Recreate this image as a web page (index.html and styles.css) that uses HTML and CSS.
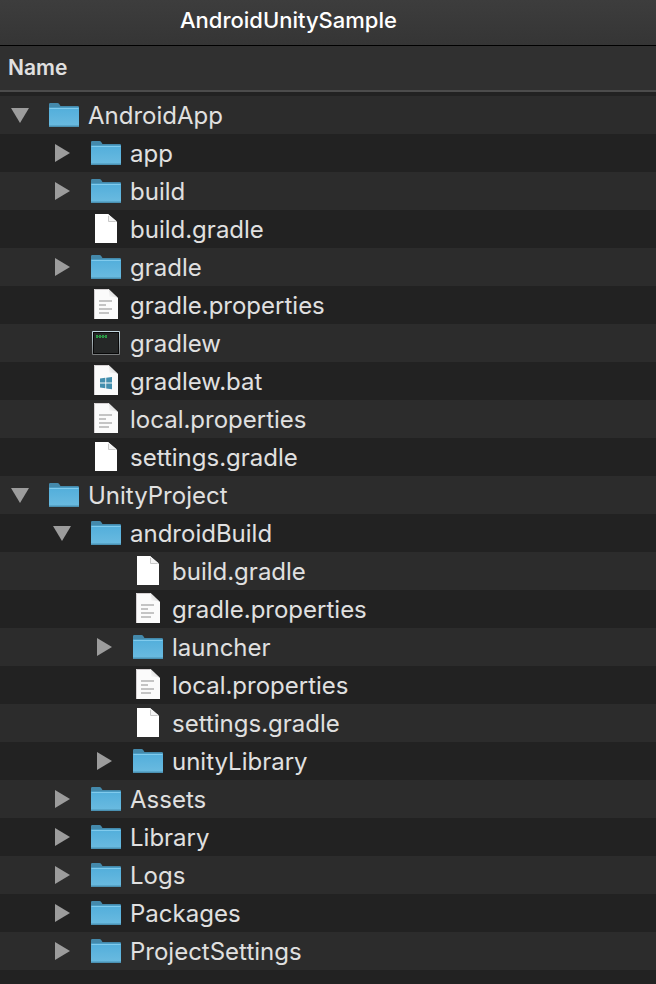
FILE: index.html
```html
<!DOCTYPE html>
<html lang="en">
<head>
    <meta charset="UTF-8">
    <meta name="viewport" content="width=device-width, initial-scale=1.0">
    <title>AndroidUnitySample</title>
    <link rel="stylesheet" href="styles.css">
</head>
<body>
    <!-- icons used by the rows -->
    <svg class="sprite" aria-hidden="true">
        <defs>
            <linearGradient id="folderFill" x1="0" y1="0" x2="0" y2="1">
                <stop offset="0" stop-color="#52aedb"/>
                <stop offset="1" stop-color="#6bbbe0"/>
            </linearGradient>
            <linearGradient id="foldFill" x1="0" y1="1" x2="1" y2="0">
                <stop offset="0" stop-color="#ffffff"/>
                <stop offset="1" stop-color="#c4c4c4"/>
            </linearGradient>
            <linearGradient id="frameFill" x1="0" y1="0" x2="0" y2="1">
                <stop offset="0" stop-color="#c3d9e2"/>
                <stop offset="1" stop-color="#77797a"/>
            </linearGradient>
        </defs>
        <symbol id="folder" viewBox="0 0 32 32">
            <path d="M1 5.2Q1 4 2.2 4H9.5Q10.500 4 11.200 5L12.500 7H29.800Q31 7 31 8.200V26H1Z" fill="#4489ab"/>
            <path d="M1 8.500H31V27Q31 28 30 28H2Q1 28 1 27Z" fill="url(#folderFill)"/>
            <path d="M1.500 9.500H30.500" stroke="#80cbed" stroke-width="1"/>
            <path d="M1 26.500H31V27Q31 28 30 28H2Q1 28 1 27Z" fill="#4a91b3"/>
        </symbol>
        <symbol id="blank" viewBox="0 0 32 32">
            <path d="M5 1H18L27 9V30H5Z" fill="#ffffff"/>
            <path d="M18 1V8.500H27Z" fill="#f4f4f4"/>
            <path d="M18.500 3V8.500H25.500" fill="none" stroke="#c8c8c8"/>
        </symbol>
        <symbol id="page" viewBox="0 0 32 32">
            <path d="M4 0H18.500L28 9V30H4Z" fill="#fbfbfb"/>
            <path d="M18.500 0Q20 4 19 8Q24 7 28 9Z" fill="url(#foldFill)"/>
            <path d="M4.500 30V.5H18" fill="none" stroke="#d4d0d2"/>
        </symbol>
        <symbol id="text" viewBox="0 0 32 32">
            <use href="#page"/>
            <path d="M9 12H22M9 16H16M9 20H22M9 24H19" stroke="#c4c4c4" stroke-width="2"/>
        </symbol>
        <symbol id="windows" viewBox="0 0 32 32">
            <use href="#page"/>
            <path d="M10 13.500L15.300 12.800V17.600H10ZM16.200 12.700L22 12V17.600H16.200ZM10 18.500H15.300V23.300L10 22.600ZM16.200 18.500H22V24.200L16.200 23.400Z" fill="#438fae"/>
        </symbol>
        <symbol id="terminal" viewBox="0 0 32 32">
            <rect x="2" y="4" width="28" height="24" rx="1" fill="url(#frameFill)"/>
            <rect x="3" y="5" width="26" height="22" fill="#080808"/>
            <rect x="4" y="6" width="24" height="20" fill="#252727"/>
            <path d="M6 9.500H17" stroke="#2c9c48" stroke-width="3" stroke-dasharray="2 1"/>
            <path d="M6 9.500H17" stroke="#268a3e" stroke-width="1"/>
        </symbol>
        <symbol id="closed" viewBox="0 0 20 20">
            <path d="M3 1L18 10L3 19Z" fill="#9c9c9c"/>
        </symbol>
        <symbol id="open" viewBox="0 0 20 20">
            <path d="M1 3H19L10 18Z" fill="#9c9c9c"/>
        </symbol>
    </svg>

    <header class="titlebar">
        <h1>AndroidUnitySample</h1>
    </header>

    <table class="files">
        <thead>
            <tr><th scope="col">Name</th></tr>
        </thead>
        <tbody id="rows"></tbody>
    </table>

    <script src="script.js"></script>
</body>
</html>
```
FILE: styles.css
```css
* {
    box-sizing: border-box;
}
body {
    margin: 0;
    min-height: 100vh;
    background: #222222;
    color: #e0e0e0;
    font-family: Inter, "Liberation Sans", sans-serif;
}
.sprite {
    position: absolute;
    width: 0;
    height: 0;
}

.titlebar {
    height: 46px;
    padding: 0 16px 0 180px;
    background: linear-gradient(#3d3d3d, #353535);
    border-bottom: 1px solid #000000;
}
.titlebar h1 {
    margin: 0;
    color: #ffffff;
    font-size: 22px;
    font-weight: 500;
    line-height: 40px;
}

.files {
    width: 100%;
    border-spacing: 0;
}
.files th {
    padding: 0 8px;
    background: #303030;
    border-bottom: 2px solid #4c4c4c;
    font-size: 21px;
    font-weight: 600;
    line-height: 44px;
    text-align: left;
}
.files tbody::before {
    content: "";
    display: block;
    height: 4px;
}
.files td {
    padding: 0;
}
.files tbody tr:nth-child(odd) {
    background: #2c2c2c;
}

.row {
    display: flex;
    align-items: center;
    height: 38px;
    padding-left: 10px;
    font-size: 24px;
    white-space: nowrap;
}
.level-1 {
    padding-left: 52px;
}
.level-2 {
    padding-left: 94px;
}
.toggle {
    width: 20px;
    height: 20px;
    margin-right: 18px;
    padding: 0;
    border: 0;
    background: none;
}
.toggle svg {
    display: block;
    width: 20px;
    height: 20px;
}
.icon {
    width: 32px;
    height: 32px;
    margin-right: 8px;
}
```
FILE: script.js
```js
// [level, icon, name, toggle state]
const files = [
    [0, "folder", "AndroidApp", "open"],
    [1, "folder", "app", "closed"],
    [1, "folder", "build", "closed"],
    [1, "blank", "build.gradle"],
    [1, "folder", "gradle", "closed"],
    [1, "text", "gradle.properties"],
    [1, "terminal", "gradlew"],
    [1, "windows", "gradlew.bat"],
    [1, "text", "local.properties"],
    [1, "blank", "settings.gradle"],
    [0, "folder", "UnityProject", "open"],
    [1, "folder", "androidBuild", "open"],
    [2, "blank", "build.gradle"],
    [2, "text", "gradle.properties"],
    [2, "folder", "launcher", "closed"],
    [2, "text", "local.properties"],
    [2, "blank", "settings.gradle"],
    [2, "folder", "unityLibrary", "closed"],
    [1, "folder", "Assets", "closed"],
    [1, "folder", "Library", "closed"],
    [1, "folder", "Logs", "closed"],
    [1, "folder", "Packages", "closed"],
    [1, "folder", "ProjectSettings", "closed"]
];

const toggle = (name, state) => {
    if(!state) {
        return `<span class="toggle"></span>`;
    }
    return `<button type="button" class="toggle" aria-label="${name}" aria-expanded="${state === "open"}"><svg><use href="#${state}"/></svg></button>`;
};

document.getElementById("rows").innerHTML = files.map(([level, icon, name, state]) => `
    <tr><td><div class="row level-${level}">
        ${toggle(name, state)}
        <svg class="icon" aria-hidden="true"><use href="#${icon}"/></svg>
        <span>${name}</span>
    </div></td></tr>`).join("");
```
